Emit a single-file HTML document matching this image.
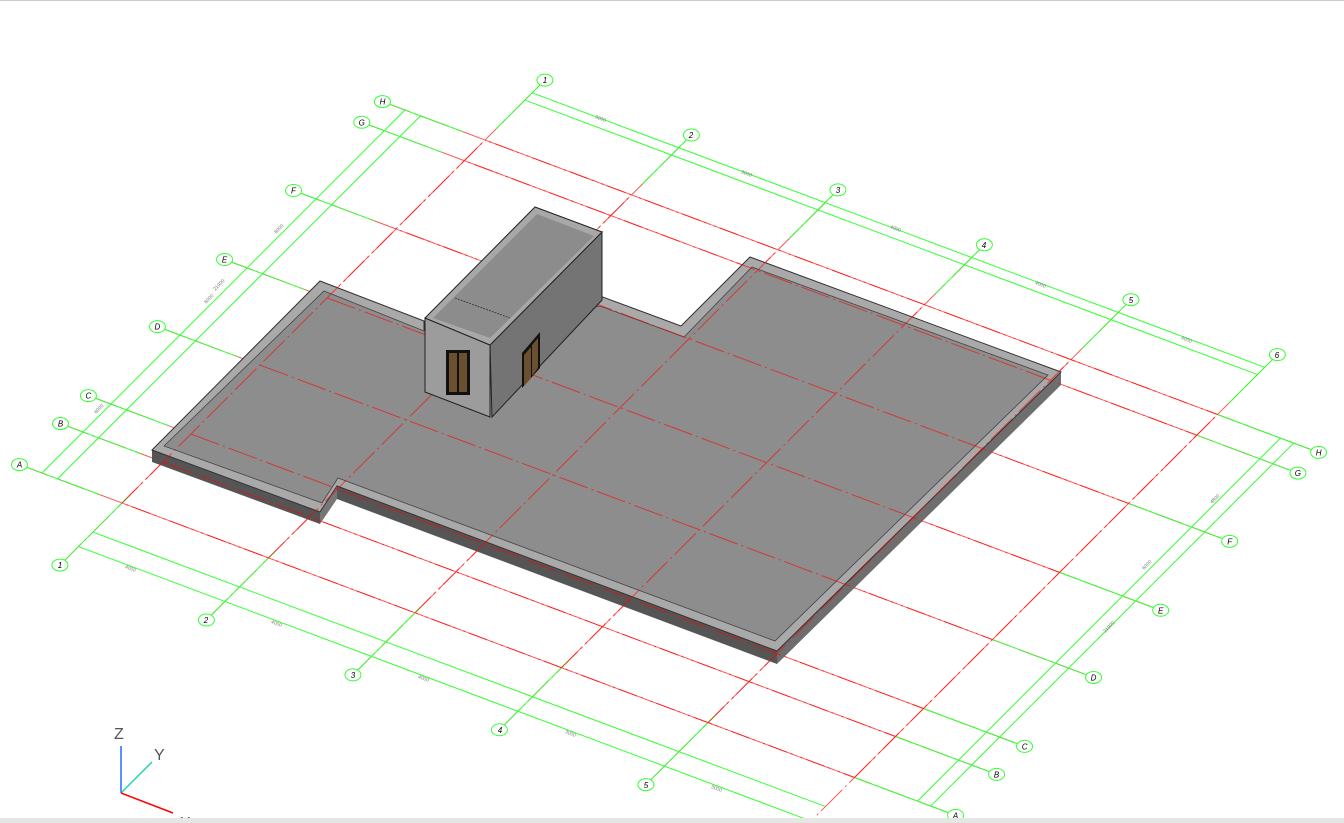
<!DOCTYPE html>
<html><head><meta charset="utf-8"><style>
html,body{margin:0;padding:0;background:#fff;width:1344px;height:823px;overflow:hidden}
svg{display:block}
text{font-family:"Liberation Sans",sans-serif}
.b{font-size:8px;font-style:italic;fill:#000;text-anchor:middle}
.d{font-size:5px;fill:#777;text-anchor:middle}
</style></head><body>
<svg id="s" width="1344" height="823" viewBox="0 0 1344 823" xmlns="http://www.w3.org/2000/svg">
<rect x="0" y="0" width="1344" height="1" fill="#ccc"/>
<g id="grid"></g>
<!-- slab side faces -->
<polygon points="152,450 320,512 320,524 152,462" fill="#555"/>
<polygon points="320,512 337,487 337,499 320,524" fill="#777"/>
<polygon points="337,486 777,651 777,664 337,499" fill="#555"/>
<polygon points="777,651 1061,372 1061,385 777,664" fill="#6e6e6e"/>
<!-- wall tops -->
<polygon points="152,450 320,281 424,321 424,330 600,296 681,326 750,257 1061,372 777,651 337,486 320,512" fill="#a9a9a9" stroke="#333" stroke-width="1"/>
<!-- floor -->
<polygon points="164,446 324,291 424,331 600,306 684,337 752,267 1048,375 775,641 338,478 322,503" fill="#8d8d8d" stroke="#444" stroke-width="0.8"/>
<g id="grid2" opacity="0.6"></g>
<!-- tower -->
<polygon points="490,345 602,232 602,300 492,417" fill="#747474" stroke="#222" stroke-width="1"/>
<polygon points="425,318 490,345 490,417 425,392" fill="#9c9c9c" stroke="#222" stroke-width="1"/>
<polygon points="425,318 535,207 602,232 490,345" fill="#a8a8a8" stroke="#222" stroke-width="1"/>
<polygon points="433,318 537,214 594,236 490,338" fill="#8c8c8c"/>
<line x1="455" y1="298" x2="510" y2="318" stroke="#333" stroke-dasharray="2,1" stroke-width="0.8"/>
<rect x="446" y="350" width="24" height="45" fill="#111"/>
<rect x="449" y="353" width="8" height="39" fill="#6b5030"/>
<rect x="459" y="353" width="8" height="39" fill="#6b5030"/>
<polygon points="522,353 540,332 540,368 522,388" fill="#111"/>
<polygon points="524,355 531,347 531,378 524,386" fill="#6b5030"/>
<polygon points="532,345 538,338 538,368 532,376" fill="#6b5030"/>
<!-- bubbles -->
<g id="bub" fill="#fff" stroke="#3f3" stroke-width="1"></g>
<g>
<text class="b" x="545" y="83">1</text><text class="b" x="691" y="138">2</text><text class="b" x="838" y="193">3</text><text class="b" x="984" y="248">4</text><text class="b" x="1131" y="303">5</text><text class="b" x="1277" y="358">6</text>
<text class="b" x="60" y="568">1</text><text class="b" x="206" y="623">2</text><text class="b" x="353" y="678">3</text><text class="b" x="500" y="733">4</text><text class="b" x="646" y="788">5</text>
<text class="b" x="19.5" y="467.6">A</text><text class="b" x="60.5" y="426.6">B</text><text class="b" x="88.4" y="398.6">C</text><text class="b" x="157.4" y="329.6">D</text><text class="b" x="224.5" y="262.5">E</text><text class="b" x="293.5" y="193.5">F</text><text class="b" x="361.8" y="125.3">G</text><text class="b" x="382.5" y="104.6">H</text>
<text class="b" x="955.6" y="818.4">A</text><text class="b" x="996.6" y="777.4">B</text><text class="b" x="1024.6" y="749.4">C</text><text class="b" x="1093.5" y="680.5">D</text><text class="b" x="1160.7" y="613.4">E</text><text class="b" x="1229.7" y="544.3">F</text><text class="b" x="1297.9" y="476.1">G</text><text class="b" x="1318.6" y="455.4">H</text>
<text class="d" x="600" y="120" transform="rotate(20.5 600 120)">3000</text>
<text class="d" x="746" y="175" transform="rotate(20.5 746 175)">3000</text>
<text class="d" x="895" y="230" transform="rotate(20.5 895 230)">4000</text>
<text class="d" x="1040" y="286" transform="rotate(20.5 1040 286)">4000</text>
<text class="d" x="1186" y="341" transform="rotate(20.5 1186 341)">4000</text>
<text class="d" x="130" y="570" transform="rotate(20.5 130 570)">4000</text>
<text class="d" x="276" y="625" transform="rotate(20.5 276 625)">4000</text>
<text class="d" x="423" y="680" transform="rotate(20.5 423 680)">4000</text>
<text class="d" x="570" y="735" transform="rotate(20.5 570 735)">3000</text>
<text class="d" x="716" y="790" transform="rotate(20.5 716 790)">3000</text>
<text class="d" x="100" y="410" transform="rotate(-45 100 410)">6000</text>
<text class="d" x="210" y="300" transform="rotate(-45 210 300)">6000</text>
<text class="d" x="280" y="230" transform="rotate(-45 280 230)">6000</text>
<text class="d" x="220" y="286" transform="rotate(-45 220 286)">21900</text>
<text class="d" x="1216" y="500" transform="rotate(-45 1216 500)">4800</text>
<text class="d" x="1148" y="566" transform="rotate(-45 1148 566)">6000</text>
<text class="d" x="1110" y="628" transform="rotate(-45 1110 628)">21900</text>
</g>
<!-- triad -->
<line x1="121" y1="793" x2="121" y2="746" stroke="#1e6fff" stroke-width="1.5"/>
<line x1="121" y1="793" x2="152" y2="762" stroke="#22d3b0" stroke-width="1.5"/>
<line x1="121" y1="793" x2="173" y2="813" stroke="#f00" stroke-width="1.5"/>
<text x="114" y="739" font-size="16" fill="#555">Z</text>
<text x="154" y="760" font-size="16" fill="#555">Y</text>
<text x="180" y="828" font-size="16" fill="#555">X</text>
<rect x="0" y="818" width="1344" height="5" fill="#e6e6e6"/>
</svg>
<script>
(function(){
var NS="http://www.w3.org/2000/svg";
var f=[0,.113,.19,.38,.565,.755,.943,1];
function P(i,F){return [122+146.5*i+363*F,503+54.9*i-363*F];}
function L(g,a,b,col,dash,w){var l=document.createElementNS(NS,"line");l.setAttribute("x1",a[0]);l.setAttribute("y1",a[1]);l.setAttribute("x2",b[0]);l.setAttribute("y2",b[1]);l.setAttribute("stroke",col);l.setAttribute("stroke-width",w||1);if(dash)l.setAttribute("stroke-dasharray",dash);g.appendChild(l);}
var g=document.getElementById("grid"),g2=document.getElementById("grid2"),bb=document.getElementById("bub");
var red="#f55",dd="30,4,2,4",gr="#3f3";
for(var k=0;k<6;k++){
 L(g,P(k,-0.17),P(k,1.165),red,dd);L(g2,P(k,0),P(k,1),"#f00",dd);
 L(g,P(k,1.03),P(k,1.165),gr);if(k<5)L(g,P(k,-0.171),P(k,0.02),gr);
}
for(var j=0;j<8;j++){
 L(g,P(-0.7,f[j]),P(5.69,f[j]),red,dd);L(g2,P(0,f[j]),P(5,f[j]),"#f00",dd);
 L(g,P(-0.7,f[j]),P(-0.15,f[j]),gr);L(g,P(5.0,f[j]),P(5.69,f[j]),gr);
}
[-0.546,-0.44,5.43,5.52].forEach(function(i){L(g,P(i,0),P(i,1),gr);});
[1.13,1.11,-0.08,-0.12].forEach(function(F){L(g,P(0,F),P(5,F),gr);});
function E(c){var e=document.createElementNS(NS,"ellipse");e.setAttribute("cx",c[0]);e.setAttribute("cy",c[1]);e.setAttribute("rx",8);e.setAttribute("ry",6);bb.appendChild(e);}
for(var k=0;k<6;k++){E(P(k,1.165));if(k<5)E(P(k,-0.171));}
for(var j=0;j<8;j++){E(P(-0.7,f[j]));E(P(5.69,f[j]));}
})();
</script>
</body></html>
